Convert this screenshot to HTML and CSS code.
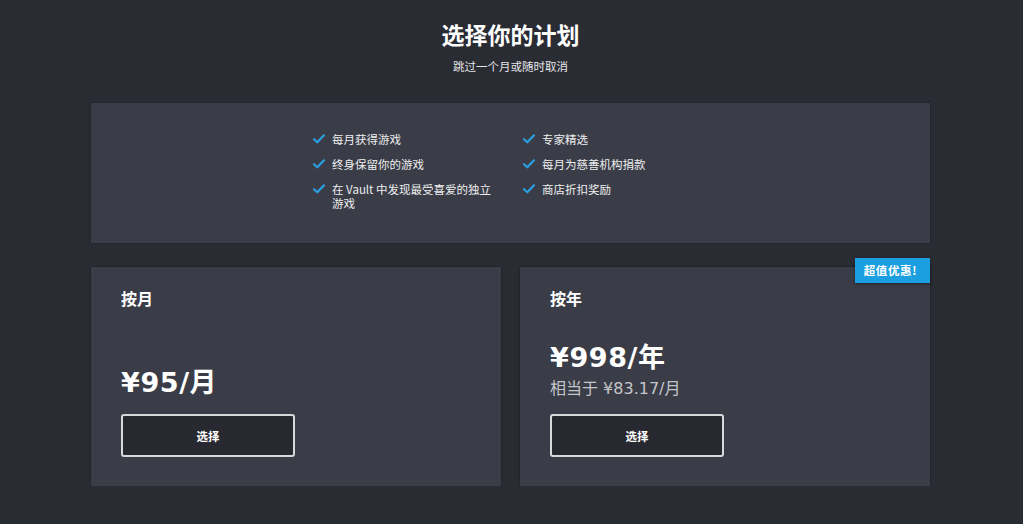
FILE: index.html
```html
<!DOCTYPE html>
<html lang="zh-CN">
<head>
    <meta charset="UTF-8">
    <meta name="viewport" content="width=device-width, initial-scale=1.0">
    <title>选择你的计划</title>
    <link rel="stylesheet" href="styles.css">
</head>
<body>
    <div class="page">
        <div class="header">
            <h1>选择你的计划</h1>
            <p>跳过一个月或随时取消</p>
        </div>

        <div class="perks">
            <ul class="perk-list">
                <li><svg class="check" viewBox="0 0 12 10"><path d="M1 5.2 L4.3 8.3 L11 1.3"/></svg><span>每月获得游戏</span></li>
                <li><svg class="check" viewBox="0 0 12 10"><path d="M1 5.2 L4.3 8.3 L11 1.3"/></svg><span>专家精选</span></li>
                <li><svg class="check" viewBox="0 0 12 10"><path d="M1 5.2 L4.3 8.3 L11 1.3"/></svg><span>终身保留你的游戏</span></li>
                <li><svg class="check" viewBox="0 0 12 10"><path d="M1 5.2 L4.3 8.3 L11 1.3"/></svg><span>每月为慈善机构捐款</span></li>
                <li><svg class="check" viewBox="0 0 12 10"><path d="M1 5.2 L4.3 8.3 L11 1.3"/></svg><span>在 Vault 中发现最受喜爱的独立游戏</span></li>
                <li><svg class="check" viewBox="0 0 12 10"><path d="M1 5.2 L4.3 8.3 L11 1.3"/></svg><span>商店折扣奖励</span></li>
            </ul>
        </div>

        <div class="plans">
            <div class="plan">
                <h2>按月</h2>
                <div class="price-block">
                    <div class="price">¥95/月</div>
                </div>
                <button class="choose">选择</button>
            </div>
            <div class="plan">
                <div class="badge">超值优惠!</div>
                <h2>按年</h2>
                <div class="price-block">
                    <div class="price">¥998/年</div>
                    <div class="per-month">相当于 ¥83.17/月</div>
                </div>
                <button class="choose">选择</button>
            </div>
        </div>
    </div>
</body>
</html>
```

FILE: styles.css
```css
body {
    margin: 0;
    background-color: #2a2c34;
    color: #ffffff;
    font-family: "Noto Sans CJK SC", "Noto Sans", sans-serif;
}

.page {
    width: 839px;
    margin-left: 91px;
    padding-top: 19px;
}

.header {
    text-align: center;
}

.header h1 {
    margin: 0;
    font-size: 23px;
    line-height: 30px;
    font-weight: 700;
}

.header p {
    margin: 9px 0 0;
    font-size: 11.5px;
    line-height: 16px;
    color: #e6e6e8;
}

.perks {
    margin-top: 29px;
    height: 140px;
    box-sizing: border-box;
    padding-top: 29px;
    background: #3a3d47;
    box-shadow: 0 0 2px rgba(0, 0, 0, 0.4);
}

.perk-list {
    list-style: none;
    margin: 0 0 0 222px;
    padding: 0;
    display: grid;
    grid-template-columns: 200px 200px;
    column-gap: 10px;
    row-gap: 11px;
    width: 410px;
}

.perk-list li {
    display: flex;
    align-items: flex-start;
    font-size: 11.5px;
    line-height: 14px;
    color: #eeeeef;
}

.perk-list li span {
    width: 165px;
}

.check {
    width: 12px;
    height: 10px;
    margin: 2px 7px 0 0;
    flex-shrink: 0;
}

.check path {
    fill: none;
    stroke: #2a9fe2;
    stroke-width: 2.2;
    stroke-linecap: round;
    stroke-linejoin: round;
}

.plans {
    margin-top: 24px;
    display: flex;
    gap: 19px;
}

.plan {
    position: relative;
    flex: 1;
    height: 219px;
    box-sizing: border-box;
    padding: 20px 30px 29px;
    background: #3a3d47;
    box-shadow: 0 0 2px rgba(0, 0, 0, 0.45);
    display: flex;
    flex-direction: column;
    align-items: flex-start;
}

.plan h2 {
    margin: 0;
    font-size: 16px;
    line-height: 22px;
    font-weight: 700;
}

.price-block {
    margin-top: auto;
    margin-bottom: 14px;
}

.price {
    font-family: "DejaVu Sans", "Noto Sans CJK SC", sans-serif;
    font-size: 27px;
    line-height: 34px;
    font-weight: 700;
    letter-spacing: 0.6px;
}

.per-month {
    margin-top: 3px;
    font-family: "DejaVu Sans", "Noto Sans CJK SC", sans-serif;
    font-size: 16px;
    line-height: 22px;
    color: #c4c5ca;
}

.choose {
    width: 174px;
    height: 43px;
    background: #272830;
    border: 2px solid #d9d9dc;
    border-radius: 3px;
    color: #ffffff;
    font-family: inherit;
    font-size: 11.5px;
    font-weight: 700;
    cursor: pointer;
}

.badge {
    position: absolute;
    top: -9px;
    right: 0;
    height: 25px;
    line-height: 25px;
    padding: 0 13px 0 9px;
    background: #1b9fe0;
    color: #ffffff;
    font-size: 11.5px;
    font-weight: 700;
    letter-spacing: 0.6px;
    box-shadow: 0 1px 3px rgba(0, 0, 0, 0.4);
}
```
